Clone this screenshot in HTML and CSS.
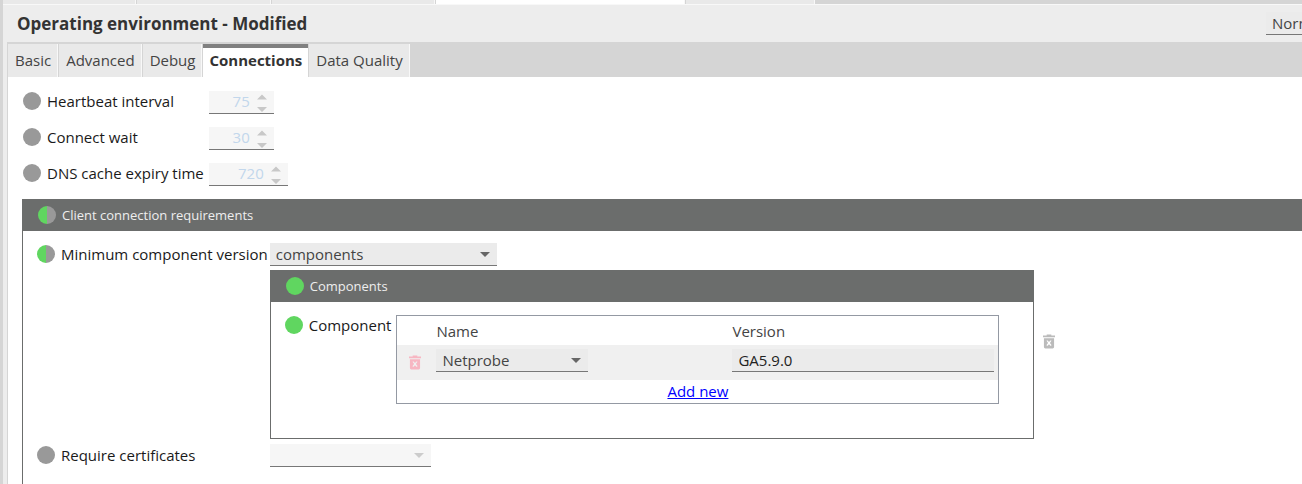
FILE: index.html
```html
<!DOCTYPE html>
<html lang="en">
<head>
  <meta charset="UTF-8">
  <title>Operating environment</title>
  <link rel="stylesheet" href="styles.css">
</head>
<body>
  <svg class="sprite" aria-hidden="true">
    <symbol id="trash" viewBox="0 0 13 15">
      <path fill="currentColor" fill-rule="evenodd" d="M4 0h5v1h4v2H0V1h4zM1 4h11v9.500a1.500 1.500 0 0 1-1.500 1.500h-8a1.500 1.500 0 0 1-1.500-1.500zM4 7l1.500 2L4 11v1h1l1.500-1.500L8 12h1v-1L7.500 9 9 7V6.500H8L6.500 8 5 6.500H4z"/>
    </symbol>
    <symbol id="spin" viewBox="0 0 10 18">
      <path fill="currentColor" d="M0 5.500l5-5 5 5zM0 13h10l-5 5z"/>
    </symbol>
  </svg>

  <div class="workspace">
    <div class="file-tabs">
      <span class="file-tab first"></span>
      <span class="file-tab second"></span>
      <span class="file-tab third"></span>
      <span class="file-tab open"></span>
      <span class="file-tab last"></span>
    </div>

    <header class="title-bar">
      <h1>Operating environment - Modified</h1>
      <select class="field mode" aria-label="Mode">
        <option>Normal</option>
      </select>
    </header>

    <main class="editor">
      <nav class="tabs">
        <button class="tab">Basic</button>
        <button class="tab">Advanced</button>
        <button class="tab">Debug</button>
        <button class="tab active">Connections</button>
        <button class="tab">Data Quality</button>
      </nav>

      <div class="content">
        <div class="settings">
          <div class="name"><span class="dot"></span><label for="heartbeat">Heartbeat interval</label></div>
          <div class="spinner">
            <input id="heartbeat" class="field" type="number" value="75" disabled>
            <svg><use href="#spin"/></svg>
          </div>
          <div class="name"><span class="dot"></span><label for="wait">Connect wait</label></div>
          <div class="spinner">
            <input id="wait" class="field" type="number" value="30" disabled>
            <svg><use href="#spin"/></svg>
          </div>
          <div class="name"><span class="dot"></span><label for="dns">DNS cache expiry time</label></div>
          <div class="spinner wide">
            <input id="dns" class="field" type="number" value="720" disabled>
            <svg><use href="#spin"/></svg>
          </div>
        </div>

        <section class="panel client">
          <h2><span class="dot half"></span>Client connection requirements</h2>
          <div class="panel-body">
            <div class="name"><span class="dot half"></span><label for="minimum">Minimum component version</label></div>
            <div class="value">
              <div class="stack">
                <select id="minimum" class="field minimum">
                  <option>components</option>
                </select>
                <section class="panel components">
                  <h2><span class="dot on"></span>Components</h2>
                  <div class="component-row">
                    <div class="name"><span class="dot on"></span><span>Component</span></div>
                    <table>
                      <thead>
                        <tr><th class="tool"></th><th class="name-col">Name</th><th>Version</th></tr>
                      </thead>
                      <tbody>
                        <tr>
                          <td class="tool"><button class="delete pink" aria-label="Delete component"><svg><use href="#trash"/></svg></button></td>
                          <td>
                            <select class="field component" aria-label="Name">
                              <option>Netprobe</option>
                            </select>
                          </td>
                          <td class="version"><input class="field" type="text" value="GA5.9.0" aria-label="Version"></td>
                        </tr>
                      </tbody>
                      <tfoot>
                        <tr><td colspan="3"><a href="#">Add new</a></td></tr>
                      </tfoot>
                    </table>
                  </div>
                </section>
              </div>
              <button class="delete" aria-label="Delete components"><svg><use href="#trash"/></svg></button>
            </div>

            <div class="name"><span class="dot"></span><label for="certificates">Require certificates</label></div>
            <select id="certificates" class="field certificates" disabled>
              <option></option>
            </select>
          </div>
        </section>
      </div>
    </main>
  </div>
</body>
</html>
```
FILE: styles.css
```css
* {
  box-sizing: border-box;
}

body {
  margin: 0;
  background: #ededed;
  color: #1a1a1a;
  font: 15px/20px "Open Sans", "Noto Sans", sans-serif;
}

button, input, select {
  font: inherit;
  color: inherit;
}

button {
  border: none;
  padding: 0;
  background: none;
}

.sprite {
  display: none;
}

.workspace {
  display: flex;
  flex-direction: column;
  min-height: 100vh;
  border-left: 3px solid #d5d5d5;
}

.file-tabs {
  display: flex;
  flex: none;
  gap: 1px;
  height: 5px;
  background: #d5d5d5;
  border-bottom: 1px solid #f8f8f8;
}

.file-tab {
  background: #e9e9e9;
  border-right: 1px solid #f8f8f8;
}

.first { width: 133px; }
.second { width: 134px; }
.third { width: 163px; }
.last { width: 129px; }

.file-tab.open {
  width: 249px;
  background: #fff;
}

.title-bar {
  display: flex;
  flex: none;
  align-items: center;
  justify-content: space-between;
  height: 37px;
  padding-left: 14px;
}

h1 {
  margin: 0;
  font-size: 17px;
  line-height: 24px;
  color: #333;
}

.field {
  height: 23px;
  padding: 0 6px;
  border: none;
  border-bottom: 1px solid #777;
  border-radius: 0;
  background-color: #ebebeb;
  color: #444;
  line-height: 20px;
  outline: none;
}

select.field {
  appearance: none;
  background-image: url("data:image/svg+xml,%3Csvg xmlns='http://www.w3.org/2000/svg' width='10' height='5'%3E%3Cpath fill='%23666' d='M0 0h10L5 5z'/%3E%3C/svg%3E");
  background-repeat: no-repeat;
  background-position: right 7px center;
}

.field:disabled {
  background-color: #f6f6f6;
  color: #c2d7ec;
  opacity: 1;
}

/* collapsed to the edge of the bar, no arrow */
select.mode {
  width: 36px;
  padding-right: 0;
  background-image: none;
  text-overflow: clip;
}

.editor {
  display: flex;
  flex: 1;
  flex-direction: column;
  margin-left: 4px;
  border-left: 1px solid #d5d5d5;
  background: #fff;
}

.tabs {
  display: flex;
  flex: none;
  gap: 1px;
  height: 35px;
  padding-top: 2px;
  background: #d5d5d5;
}

.tab {
  padding: 0 6px 2px 7px;
  border-right: 1px solid #f8f8f8;
  background: #e9e9e9;
  color: #444;
}

.tab.active {
  padding: 0 6px 6px;
  border-top: 4px solid #808080;
  border-right: none;
  background: #fff;
  color: #333;
  font-weight: bold;
}

.content {
  display: flex;
  flex: 1;
  flex-direction: column;
  padding: 14px 0 0 14px;
}

.settings {
  display: grid;
  grid-template-columns: max-content max-content;
  gap: 13px 5px;
  padding-left: 1px;
}

.name {
  display: flex;
  align-items: center;
  gap: 6px;
  height: 24px;
}

.settings .name,
.component-row .name {
  height: 20px;
}

.dot {
  flex: none;
  width: 18px;
  height: 18px;
  border-radius: 50%;
  background: #999;
}

.dot.on {
  background: #60d660;
}

.dot.half {
  background: linear-gradient(to right, #60d660 50%, #999 50%);
}

.spinner {
  position: relative;
  display: flex;
  width: 65px;
}

.spinner.wide {
  width: 79px;
}

.spinner .field {
  width: 100%;
  padding: 0 24px 2px 0;
  text-align: right;
  appearance: textfield;
}

.spinner input::-webkit-inner-spin-button {
  appearance: none;
  margin: 0;
}

.spinner svg {
  position: absolute;
  top: 3px;
  right: 7px;
  width: 10px;
  height: 18px;
  color: #c8c8c8;
}

.panel {
  border: 1px solid #6b6d6c;
}

.panel h2 {
  display: flex;
  align-items: center;
  gap: 6px;
  height: 31px;
  margin: 0;
  padding: 0 0 2px 15px;
  background: #6b6d6c;
  color: #eee;
  font-size: 13px;
  font-weight: normal;
}

.client {
  flex: 1;
  margin-top: 13px;
  border-right: none;
  border-bottom: none;
}

.panel-body {
  display: grid;
  grid-template-columns: max-content max-content;
  gap: 5px 2px;
  padding: 12px 0 0 14px;
}

.panel-body > .name {
  height: 22px;
}

.value {
  display: flex;
  align-items: center;
  gap: 9px;
}

.stack {
  display: flex;
  flex-direction: column;
  gap: 4px;
}

.minimum {
  width: 227px;
}

.certificates {
  width: 161px;
}

.certificates:disabled {
  background-image: url("data:image/svg+xml,%3Csvg xmlns='http://www.w3.org/2000/svg' width='10' height='5'%3E%3Cpath fill='%23ccc' d='M0 0h10L5 5z'/%3E%3C/svg%3E");
}

.component-row {
  display: flex;
  gap: 5px;
  padding: 13px 34px 34px 14px;
}

table {
  width: 603px;
  border: 1px solid #9499a3;
  border-collapse: separate;
  border-spacing: 0;
}

th, td {
  padding: 0;
  text-align: left;
  color: #444;
}

th {
  height: 29px;
  font-weight: normal;
}

tbody td {
  height: 35px;
  padding: 0 0 4px;
  background: #f0f0f0;
}

tfoot td {
  height: 23px;
  padding-bottom: 2px;
  text-align: center;
}

.tool {
  width: 39px;
}

tbody td.tool {
  padding: 0;
}

.name-col {
  width: 296px;
}

td .field {
  display: block;
}

.component {
  width: 152px;
}

tbody td.version {
  padding-right: 4px;
}

.version .field {
  width: 100%;
  color: #222;
}

.delete svg {
  display: block;
  width: 12px;
  height: 15px;
  color: #bbb;
}

.tool .delete {
  display: block;
  margin-left: 12px;
}

.delete.pink svg {
  color: #f7b6c2;
}

a {
  color: #00f;
}
```
